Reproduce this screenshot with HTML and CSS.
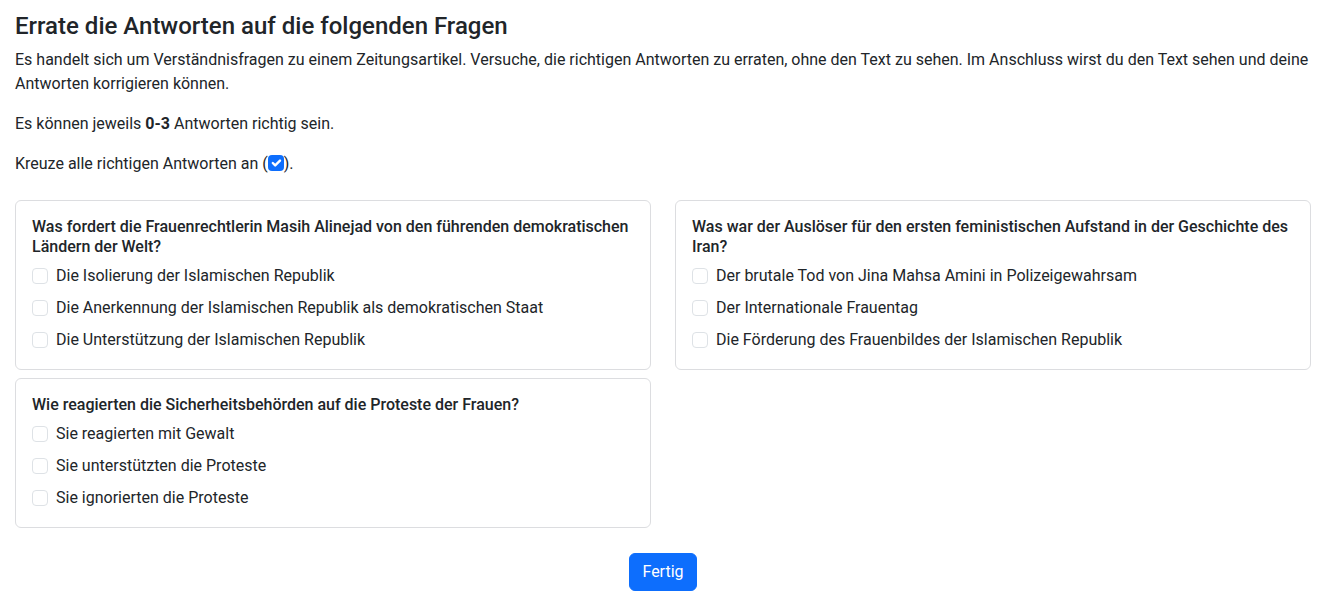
FILE: index.html
```html
<!DOCTYPE html>
<html lang="de">
<head>
<meta charset="utf-8">
<title>Fragen</title>
<link rel="stylesheet" href="styles.css">
</head>
<body>
<main class="page">
  <h1 class="title">Errate die Antworten auf die folgenden Fragen</h1>
  <p class="text">Es handelt sich um Verständnisfragen zu einem Zeitungsartikel. Versuche, die richtigen Antworten zu erraten, ohne den Text zu sehen. Im Anschluss wirst du den Text sehen und deine Antworten korrigieren können.</p>
  <p class="text">Es können jeweils <strong>0-3</strong> Antworten richtig sein.</p>
  <p class="text">Kreuze alle richtigen Antworten an (<span class="check-demo"><svg viewBox="0 0 20 20" width="16" height="16"><path d="M6 10l3 3l6-6" fill="none" stroke="#fff" stroke-width="3" stroke-linecap="round" stroke-linejoin="round"/></svg></span>).</p>

  <div class="grid">
    <section class="card">
      <h2 class="question">Was fordert die Frauenrechtlerin Masih Alinejad von den führenden demokratischen Ländern der Welt?</h2>
      <label class="option"><span class="box"></span>Die Isolierung der Islamischen Republik</label>
      <label class="option"><span class="box"></span>Die Anerkennung der Islamischen Republik als demokratischen Staat</label>
      <label class="option"><span class="box"></span>Die Unterstützung der Islamischen Republik</label>
    </section>
    <section class="card">
      <h2 class="question">Was war der Auslöser für den ersten feministischen Aufstand in der Geschichte des Iran?</h2>
      <label class="option"><span class="box"></span>Der brutale Tod von Jina Mahsa Amini in Polizeigewahrsam</label>
      <label class="option"><span class="box"></span>Der Internationale Frauentag</label>
      <label class="option"><span class="box"></span>Die Förderung des Frauenbildes der Islamischen Republik</label>
    </section>
    <section class="card">
      <h2 class="question">Wie reagierten die Sicherheitsbehörden auf die Proteste der Frauen?</h2>
      <label class="option"><span class="box"></span>Sie reagierten mit Gewalt</label>
      <label class="option"><span class="box"></span>Sie unterstützten die Proteste</label>
      <label class="option"><span class="box"></span>Sie ignorierten die Proteste</label>
    </section>
  </div>

  <div class="actions">
    <button class="btn" type="button">Fertig</button>
  </div>
</main>
</body>
</html>
```

FILE: styles.css
```css
* { box-sizing: border-box; }
html, body { margin: 0; padding: 0; background: #fff; }
body {
  font-family: Roboto, "Liberation Sans", Arial, sans-serif;
  font-size: 16px;
  line-height: 1.5;
  color: #212529;
}
.page {
  padding: 12px 18px 16px 15px;
}
.title {
  margin: 0 0 7px 0;
  font-size: 24px;
  font-weight: 500;
  line-height: 1.2;
}
.text {
  margin: 0 0 16px 0;
}
.text strong { font-weight: 700; }
.check-demo {
  display: inline-flex;
  align-items: center;
  justify-content: center;
  width: 16px;
  height: 16px;
  background: #0d6efd;
  border-radius: 4px;
  vertical-align: -2px;
}
.check-demo svg { display: block; }
.grid {
  display: grid;
  grid-template-columns: 1fr 1fr;
  column-gap: 24px;
  row-gap: 8px;
  margin-top: 24px;
  align-items: start;
}
.card {
  border: 1px solid #dcdde0;
  border-radius: 6px;
  padding: 16px 16px 17px 16px;
}
.question {
  margin: 0 0 7px 0;
  font-size: 16px;
  font-weight: 500;
  line-height: 1.25;
}
.option {
  display: flex;
  align-items: center;
  gap: 8px;
  height: 24px;
  margin-bottom: 8px;
}
.option:last-child { margin-bottom: 0; }
.box {
  flex: none;
  width: 16px;
  height: 16px;
  border: 1px solid #dee2e6;
  border-radius: 4px;
  background: #fff;
}
.actions {
  display: flex;
  justify-content: center;
  margin-top: 25px;
}
.btn {
  font-family: inherit;
  font-size: 16px;
  line-height: 1.5;
  color: #fff;
  background: #0d6efd;
  border: 1px solid #0d6efd;
  border-radius: 6px;
  padding: 6px 12px;
}
```
